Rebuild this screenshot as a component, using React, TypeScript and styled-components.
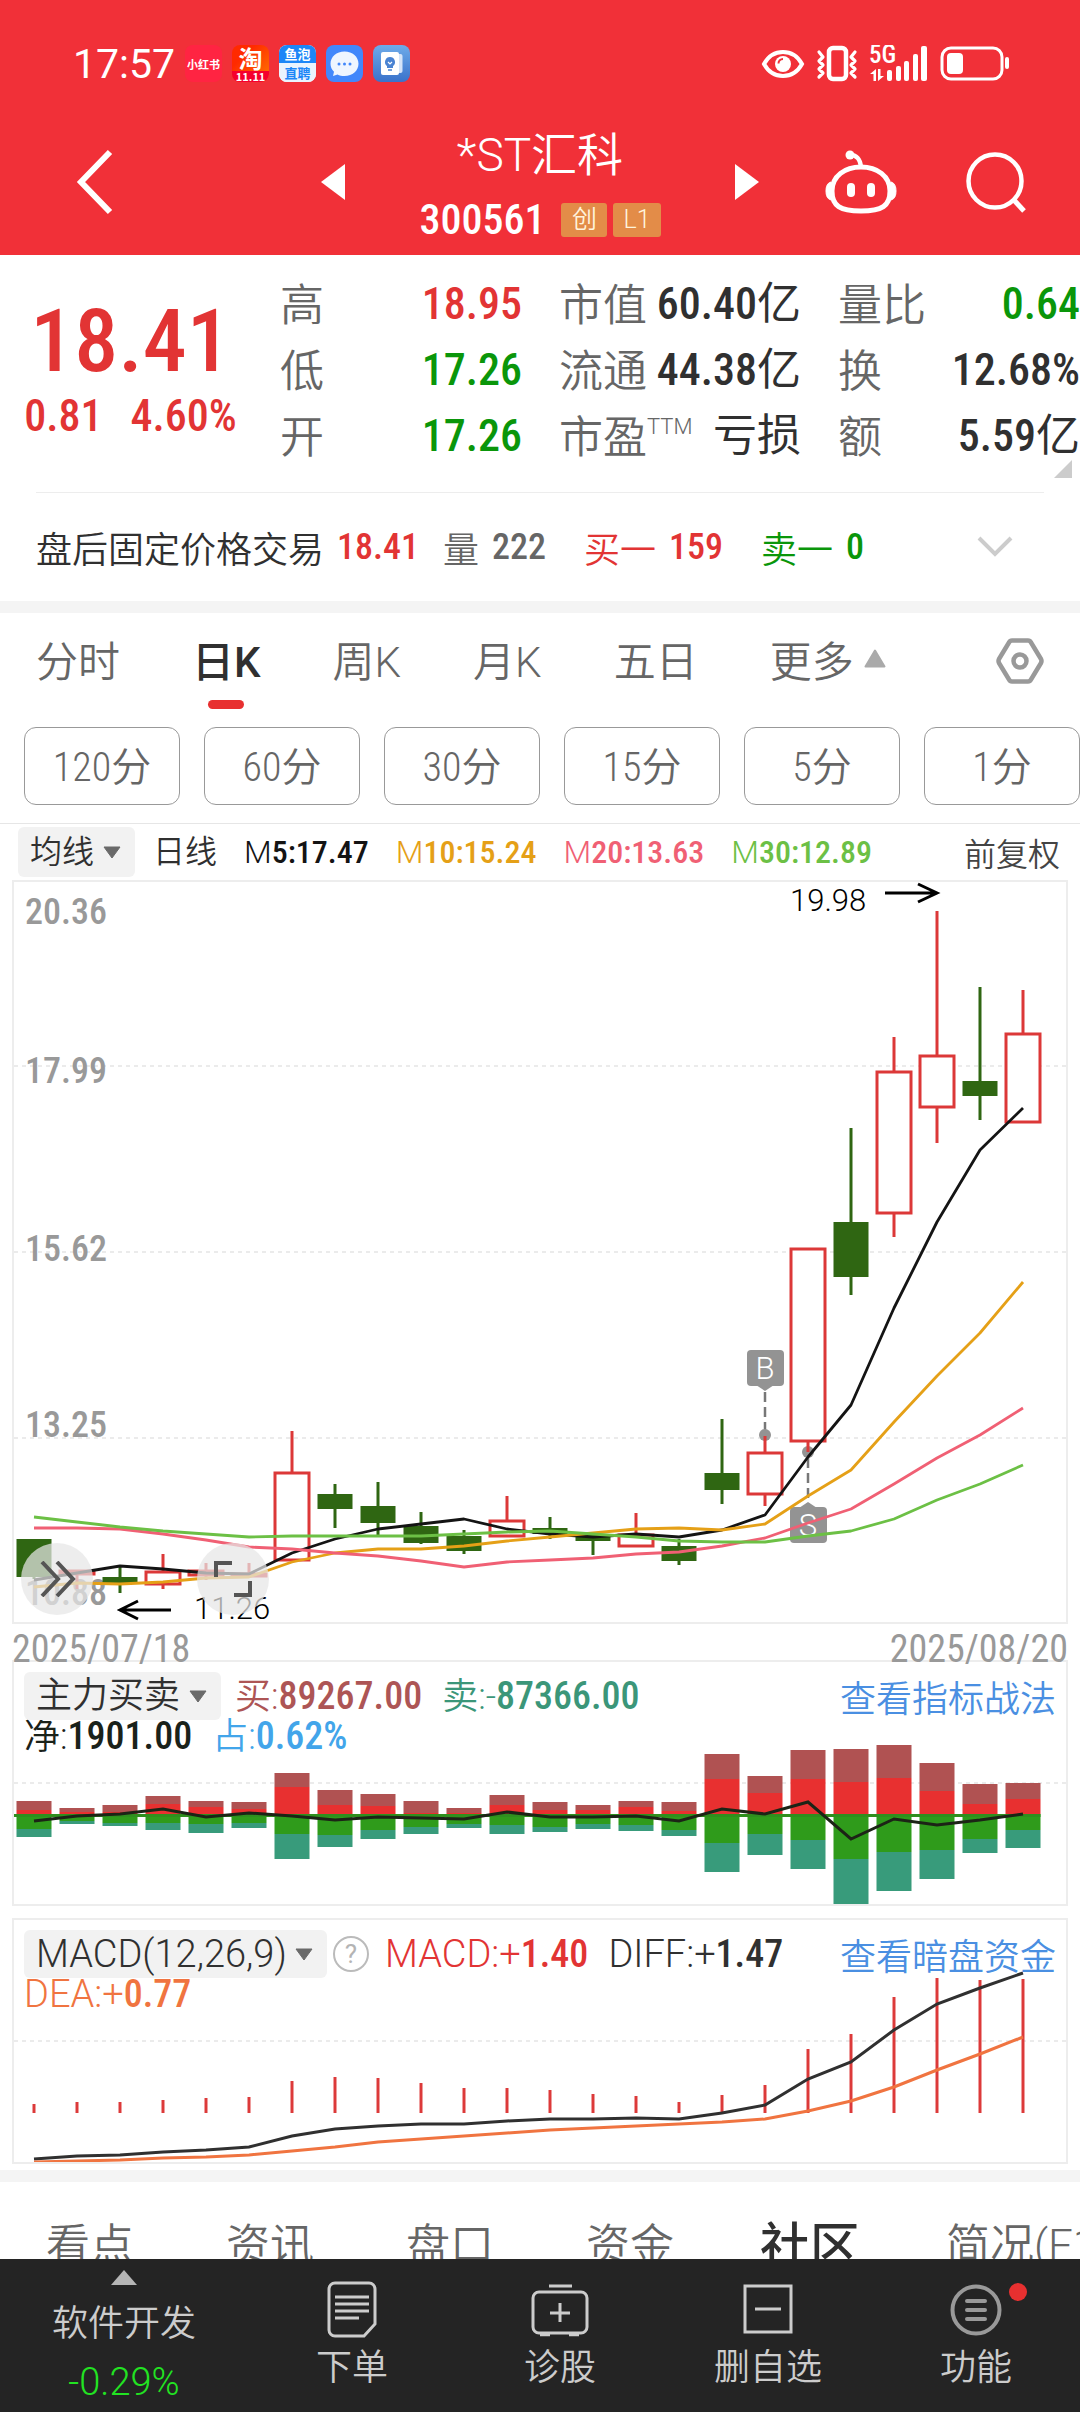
import React from 'react';
import styled, { createGlobalStyle } from 'styled-components';

const CJK = '"Noto Sans CJK SC", sans-serif';
const TEXT_FONT = `Roboto, ${CJK}`;
const NUM_FONT = `"Roboto Condensed", Roboto, ${CJK}`;
const LIGHT = 350;

const color = {
  brand: '#f13038',
  up: '#e23434',
  down: '#0a960a',
  ink: '#303030',
  muted: '#666666',
  faint: '#999999',
  line: '#ededed',
  band: '#f4f4f4',
  link: '#4a8fe2',
  candleUp: '#dc3838',
  candleDown: '#2f6612',
};

const GlobalStyle = createGlobalStyle`
  * { box-sizing: border-box; }
  body { margin: 0; background: #fff; }
  button, select { font: inherit; color: inherit; background: none; border: 0; padding: 0; margin: 0; cursor: pointer; }
  a { color: inherit; text-decoration: none; }
  svg { display: block; }
`;

const Screen = styled.div`
  display: flex;
  flex-direction: column;
  height: 100vh;
  overflow: hidden;
  font-family: ${CJK};
  font-weight: ${LIGHT};
  color: ${color.ink};
  background: #fff;
`;

const Content = styled.main`
  flex: 1;
  min-height: 0;
  overflow: hidden;
`;

/* ---------- header ---------- */

const Header = styled.header`
  background: ${color.brand};
  color: #fff;
`;

const StatusBar = styled.div`
  display: flex;
  align-items: center;
  justify-content: space-between;
  height: 108px;
  padding: 45px 70px 26px 73px;
`;

const StatusGroup = styled.div<{ $gap: number }>`
  display: flex;
  align-items: center;
  gap: ${p => p.$gap}px;
`;

const Clock = styled.span`
  font-family: ${TEXT_FONT};
  font-weight: 400;
  font-size: 41px;
  line-height: 36px;
`;

const AppIcon = styled.span<{ $bg: string; $size: number }>`
  display: flex;
  flex-direction: column;
  align-items: center;
  justify-content: center;
  width: 37px;
  height: 37px;
  border-radius: 8px;
  overflow: hidden;
  background: ${p => p.$bg};
  font-size: ${p => p.$size}px;
  font-weight: 700;
  line-height: 18px;
  white-space: nowrap;
`;

const AppIconBand = styled.span<{ $bg: string; $color: string; $size: number; $height: number }>`
  width: 100%;
  height: ${p => p.$height}px;
  background: ${p => p.$bg};
  color: ${p => p.$color};
  font-size: ${p => p.$size}px;
  line-height: ${p => p.$height}px;
  text-align: center;
`;

const TitleBar = styled.div`
  display: grid;
  grid-template-columns: 1fr 438px 1fr;
  align-items: center;
  height: 147px;
`;

const TitleActions = styled.div<{ $end?: boolean }>`
  display: flex;
  align-items: center;
  justify-content: ${p => (p.$end ? 'flex-end' : 'flex-start')};
  gap: 68px;
  padding: ${p => (p.$end ? '0 53px 0 0' : '0 0 0 76px')};
`;

const StockSwitcher = styled.div`
  display: flex;
  align-items: center;
  justify-content: space-between;
`;

const TitleBlock = styled.div`
  display: flex;
  flex-direction: column;
  align-items: center;
  gap: 20px;
`;

const StockName = styled.h1`
  margin: 0;
  font-family: ${TEXT_FONT};
  font-weight: ${LIGHT};
  font-size: 46px;
  line-height: 56px;
`;

const CodeRow = styled.div`
  display: flex;
  align-items: center;
  gap: 6px;
  height: 34px;
`;

const Code = styled.span`
  margin-right: 10px;
  font-family: ${NUM_FONT};
  font-weight: 500;
  font-size: 42px;
  line-height: 34px;
`;

const Badge = styled.span`
  min-width: 46px;
  padding: 0 10px;
  border-radius: 3px;
  background: #e38c48;
  color: #fff3dc;
  font-family: ${TEXT_FONT};
  font-size: 25px;
  line-height: 34px;
  text-align: center;
`;

/* ---------- quote ---------- */

const Quote = styled.section`
  position: relative;
  display: grid;
  grid-template-columns: 243px repeat(3, 1fr);
  column-gap: 37px;
  padding: 16px 0 23px;
`;

const PriceBlock = styled.div`
  display: flex;
  flex-direction: column;
  align-items: center;
  padding: 18px 0 0 18px;
  font-family: ${NUM_FONT};
  font-weight: 500;
  color: ${color.up};
`;

const Price = styled.div`
  font-size: 88px;
  line-height: 104px;
`;

const Change = styled.div`
  display: flex;
  gap: 28px;
  font-size: 44px;
  line-height: 46px;
`;

const Stats = styled.dl`
  margin: 0;
`;

const Stat = styled.div`
  display: flex;
  justify-content: space-between;
  height: 66px;
  font-size: 44px;
  line-height: 66px;
  white-space: nowrap;
`;

const StatLabel = styled.dt`
  display: flex;
  line-height: 62px;
  color: ${color.muted};
`;

const StatSup = styled.small`
  font-family: ${TEXT_FONT};
  font-size: 22px;
  line-height: 48px;
`;

const StatValue = styled.dd<{ $color: string }>`
  margin: 0;
  font-family: ${NUM_FONT};
  font-weight: 500;
  color: ${p => p.$color};
`;

const Unit = styled.span`
  font-weight: 400;
`;

const CornerMark = styled.svg`
  position: absolute;
  right: 8px;
  bottom: 14px;
`;

const AfterHours = styled.section`
  display: flex;
  align-items: center;
  justify-content: space-between;
  height: 109px;
  margin: 0 36px;
  padding-right: 31px;
  border-top: 1px solid ${color.line};
  font-size: 36px;
  line-height: 48px;
`;

const TradeGroup = styled.div<{ $gap: number }>`
  display: flex;
  align-items: center;
  gap: ${p => p.$gap}px;
`;

const TradeItem = styled.span<{ $color: string }>`
  display: flex;
  gap: 13px;
  color: ${p => p.$color};
`;

const Num = styled.span<{ $color?: string; $size?: number }>`
  font-family: ${NUM_FONT};
  font-weight: 500;
  color: ${p => p.$color ?? 'inherit'};
  font-size: ${p => (p.$size ? `${p.$size}px` : 'inherit')};
`;

const Band = styled.div`
  height: 12px;
  background: ${color.band};
`;

/* ---------- period tabs ---------- */

const PeriodTabs = styled.nav`
  display: flex;
  align-items: center;
  gap: 72px;
  height: 96px;
  padding: 0 36px;
`;

const PeriodTab = styled.button<{ $active?: boolean }>`
  position: relative;
  display: flex;
  align-items: center;
  gap: 10px;
  height: 96px;
  padding-bottom: 6px;
  font-family: ${TEXT_FONT};
  font-size: 42px;
  font-weight: ${p => (p.$active ? 500 : LIGHT)};
  color: ${p => (p.$active ? color.ink : color.muted)};

  &::after {
    content: '';
    display: ${p => (p.$active ? 'block' : 'none')};
    position: absolute;
    left: 50%;
    bottom: 0;
    width: 36px;
    height: 9px;
    margin-left: -18px;
    border-radius: 5px;
    background: #e83030;
  }
`;

const SettingsButton = styled.button`
  margin-left: auto;
`;

const MinuteRow = styled.div`
  display: grid;
  grid-template-columns: repeat(6, 1fr);
  gap: 24px;
  padding: 18px 0 18px 24px;
  border-bottom: 1px solid #e6e6e6;
`;

const MinuteButton = styled.button`
  height: 78px;
  padding-bottom: 4px;
  border: 1px solid ${color.faint};
  border-radius: 12px;
  color: ${color.muted};
  font-family: ${NUM_FONT};
  font-size: 40px;
  font-weight: ${LIGHT};
`;

/* ---------- charts ---------- */

const AverageRow = styled.div`
  display: flex;
  align-items: center;
  gap: 18px;
  height: 56px;
  padding: 0 20px 0 18px;
  font-size: 32px;
  line-height: 50px;
  white-space: nowrap;
`;

const Averages = styled.div`
  display: flex;
  gap: 27px;
`;

const Picker = styled.label<{ $size: number }>`
  position: relative;
  display: flex;
  align-items: center;
  height: ${p => (p.$size > 32 ? 48 : 50)}px;
  border-radius: 6px;
  background: #f2f2f2;
  font-family: ${TEXT_FONT};
  font-size: ${p => p.$size}px;
`;

const PickerSelect = styled.select`
  appearance: none;
  height: 100%;
  padding: 0 40px 0 12px;
`;

const PickerCaret = styled.svg`
  position: absolute;
  right: 14px;
  top: 50%;
  margin-top: -6px;
  pointer-events: none;
`;

const Average = styled.span<{ $color: string }>`
  font-family: ${TEXT_FONT};
  color: ${p => p.$color};
`;

const AdjustButton = styled.button`
  margin-left: auto;
  color: #444;
`;

const Panel = styled.section`
  display: grid;
  margin: 0 12px;
  border: 2px solid ${color.line};

  & > * {
    grid-area: 1 / 1;
    min-width: 0;
  }
`;

const Plot = styled.svg`
  width: 100%;
  height: auto;
`;

const PlotText = styled.text<{ $size: number; $fill: string; $num?: boolean }>`
  font-family: ${p => (p.$num ? NUM_FONT : TEXT_FONT)};
  font-weight: ${p => (p.$num ? 500 : 300)};
  font-size: ${p => p.$size}px;
  fill: ${p => p.$fill};
`;

const PlotButtons = styled.div`
  display: flex;
  align-items: flex-end;
  gap: 104px;
  padding: 0 0 7px 7px;
  z-index: 1;
`;

const RoundButton = styled.button`
  display: flex;
  align-items: center;
  justify-content: center;
  width: 72px;
  height: 72px;
  border-radius: 50%;
  background: rgba(230, 230, 230, 0.72);
`;

const DateRow = styled.div`
  display: flex;
  justify-content: space-between;
  height: 36px;
  padding: 0 12px;
  font-family: ${NUM_FONT};
  font-weight: 400;
  font-size: 38px;
  line-height: 50px;
  color: ${color.faint};
`;

const Legend = styled.div`
  display: flex;
  flex-direction: column;
  padding: 10px;
  z-index: 1;
  font-size: 36px;
  white-space: nowrap;
`;

const LegendRow = styled.div<{ $height: number; $gap: number }>`
  display: flex;
  align-items: center;
  gap: ${p => p.$gap}px;
  height: ${p => p.$height}px;
  line-height: ${p => p.$height}px;
`;

const LegendItem = styled.span<{ $color: string; $size?: number }>`
  font-family: ${TEXT_FONT};
  font-size: ${p => p.$size ?? 36}px;
  color: ${p => p.$color};
`;

const HelpButton = styled.button`
  width: 36px;
  height: 36px;
  margin-right: 10px;
  border: 2px solid #bbb;
  border-radius: 50%;
  color: #b4b4b4;
  font-family: ${TEXT_FONT};
  font-weight: 400;
  font-size: 26px;
  line-height: 32px;
`;

const PanelLink = styled.a`
  margin-left: auto;
  font-size: 36px;
  color: ${color.link};
`;

const Spacer = styled.div<{ $height: number }>`
  height: ${p => p.$height}px;
`;

/* ---------- bottom ---------- */

const InfoTabs = styled.nav`
  display: flex;
  height: 120px;
  overflow: hidden;
`;

const InfoTab = styled.button<{ $active?: boolean }>`
  flex: none;
  padding: 0 ${p => (p.$active ? 40 : 46)}px;
  font-family: ${TEXT_FONT};
  font-size: ${p => (p.$active ? 50 : 44)}px;
  font-weight: ${p => (p.$active ? 500 : LIGHT)};
  color: ${p => (p.$active ? color.ink : color.muted)};
  white-space: nowrap;
`;

const BottomBar = styled.footer`
  display: grid;
  grid-template-columns: 248px repeat(4, 1fr);
  height: 153px;
  background: #242424;
  color: #cccccc;
  font-size: 36px;
`;

const SectorButton = styled.button`
  display: flex;
  flex-direction: column;
  align-items: center;
  justify-content: flex-start;
  padding-top: 11px;
  line-height: 62px;
`;

const SectorName = styled.span`
  margin-top: 4px;
`;

const SectorChange = styled.span`
  font-family: ${TEXT_FONT};
  font-size: 38px;
  color: #22e322;
`;

const BarButton = styled.button`
  display: flex;
  flex-direction: column;
  align-items: center;
  justify-content: flex-start;
  gap: 8px;
  padding-top: 22px;
  line-height: 36px;
`;

const BarIcon = styled.span`
  position: relative;
  display: block;
`;

const Dot = styled.i`
  position: absolute;
  top: 2px;
  right: -25px;
  width: 18px;
  height: 18px;
  border-radius: 50%;
  background: #e83030;
`;

/* ---------- data ---------- */

const STEP = 43;
const FIRST = 20;
const HALF = 17.5;
const at = (i: number) => FIRST + STEP * i;

type Candle = { up?: boolean; high: number; top: number; bottom: number; low: number };

const c = (up: boolean, high: number, top: number, bottom: number, low: number): Candle => ({ up, high, top, bottom, low });

const candles: Candle[] = [
  c(false, 657, 657, 695, 697), c(true, 688, 689, 692, 707), c(false, 685, 695, 702, 711), c(true, 672, 690, 702, 707),
  c(true, 681, 689, 693, 698), c(true, 681, 692, 694, 695), c(true, 549, 591, 678, 679), c(false, 602, 612, 627, 646),
  c(false, 600, 624, 641, 653), c(false, 630, 644, 661, 662), c(false, 648, 654, 669, 672), c(true, 614, 639, 654, 655),
  c(false, 635, 646, 652, 657), c(false, 650, 652, 659, 673), c(true, 631, 653, 664, 665), c(false, 657, 664, 679, 683),
  c(false, 537, 591, 608, 622), c(true, 554, 571, 612, 624), c(true, 367, 367, 559, 570), c(false, 246, 340, 395, 413),
  c(true, 155, 190, 331, 355), c(true, 29, 174, 225, 261), c(false, 105, 199, 214, 238), c(true, 108, 152, 240, 241),
];

const averages = [
  { stroke: '#141414', y: [698, 691, 684, 687, 691, 692, 671, 657, 647, 642, 637, 647, 652, 655, 652, 655, 648, 633, 575, 523, 426, 340, 268, 226] },
  { stroke: '#e5a017', y: [705, 701, 702, 700, 696, 695, 680, 671, 667, 667, 664, 659, 655, 651, 647, 646, 648, 642, 614, 588, 540, 494, 451, 400] },
  { stroke: '#f06074', y: [646, 646, 647, 652, 658, 665, 667, 671, 674, 679, 685, 680, 678, 676, 672, 670, 664, 656, 641, 627, 602, 576, 553, 526] },
  { stroke: '#6cc045', y: [635, 640, 645, 649, 652, 655, 654, 654, 654, 654, 652, 650, 649, 652, 655, 659, 660, 660, 654, 649, 637, 618, 602, 583] },
];

const priceGrid = [
  { label: '20.36', baseline: 42 },
  { label: '17.99', baseline: 201, line: 184 },
  { label: '15.62', baseline: 379, line: 370 },
  { label: '13.25', baseline: 555, line: 556 },
  { label: '10.88', baseline: 723 },
];

/* per day: outer buy, main buy, main sell, outer sell */
const flows: number[][] = [
  [139, 148, 167, 175], [146, 150, 159, 162], [143, 150, 161, 164], [134, 142, 161, 168], [139, 145, 162, 171], [140, 147, 161, 166],
  [111, 125, 172, 197], [128, 143, 173, 185], [132, 144, 168, 177], [139, 151, 165, 172], [146, 151, 162, 166], [133, 143, 163, 172],
  [140, 148, 165, 170], [143, 148, 162, 167], [139, 145, 163, 169], [140, 149, 168, 174], [92, 117, 181, 210], [114, 131, 172, 193],
  [88, 117, 178, 207], [87, 120, 197, 242], [83, 116, 190, 229], [101, 129, 188, 217], [122, 142, 177, 191], [121, 137, 168, 186],
];
const netFlow = [159, 154, 152, 147, 155, 151, 154, 158, 155, 156, 157, 150, 155, 155, 154, 159, 147, 152, 140, 177, 157, 163, 158, 152];

const macd = [184, 182, 182, 180, 178, 177, 161, 157, 158, 163, 168, 168, 170, 174, 176, 182, 175, 165, 129, 114, 77, 58, 60, 59];
const diff = [239, 236, 235, 232, 230, 227, 216, 209, 206, 204, 204, 201, 199, 199, 198, 199, 193, 185, 159, 142, 110, 84, 68, 53];
const dea = [242, 241, 240, 238, 237, 235, 231, 227, 222, 219, 216, 213, 210, 208, 206, 204, 202, 199, 191, 181, 167, 150, 134, 117];

const points = (ys: number[]) => ys.map((y, i) => `${at(i)},${y}`).join(' ');

/* ---------- pieces ---------- */

function GridLine({ y }: { y: number }) {
  return <line x1="0" x2="1052" y1={y} y2={y} stroke="#ebebeb" strokeWidth="2" strokeDasharray="4 4" />;
}

function IndicatorPicker({ name, value, size }: { name: string; value: string; size: number }) {
  return (
    <Picker $size={size}>
      <PickerSelect aria-label={name} defaultValue={value}>
        <option>{value}</option>
      </PickerSelect>
      <PickerCaret width="18" height="13" viewBox="0 0 18 13">
        <path d="M1 1H17L9 12Z" fill="#6a6a6a" stroke="#6a6a6a" strokeLinejoin="round" />
      </PickerCaret>
    </Picker>
  );
}

function StatusIcons() {
  return (
    <StatusGroup $gap={11}>
      <svg width="44" height="37" viewBox="0 0 44 37" fill="none" stroke="#fff" strokeWidth="4">
        <path d="M3 19C8 10 15 7 22 7s14 3 19 12C36 28 29 31 22 31S8 28 3 19Z" />
        <circle cx="22" cy="19" r="8" fill="#fff" stroke="none" />
        <path d="M17.500 18.500a4.500 4.500 0 0 1 4.500-4.500" stroke="#f13038" strokeWidth="2" />
      </svg>
      <svg width="42" height="37" viewBox="0 0 42 37" fill="none" stroke="#fff" strokeLinecap="round" strokeLinejoin="round">
        <rect x="13" y="3" width="17" height="31" rx="4" strokeWidth="4.500" />
        <path d="M3 7l4 5-4 4 4 4-4 4 4 4-4 4M39 7l-4 5 4 4-4 4 4 4-4 4 4 4" strokeWidth="3.200" />
      </svg>
      <svg width="59" height="37" viewBox="0 0 59 37" fill="#fff">
        <PlotText as="text" x="0" y="18" $size={25} $fill="#fff" $num>5G</PlotText>
        <path d="M1 29l6-5v12H4.500v-7zM15 31l-6 5V24h2.500v7z" />
        <rect x="18" y="25" width="5" height="11" rx="2" />
        <rect x="27" y="21" width="5" height="15" rx="2" />
        <rect x="35" y="16" width="5" height="20" rx="2" />
        <rect x="44" y="9" width="5" height="27" rx="2" />
        <rect x="52" y="1" width="6" height="35" rx="2" />
      </svg>
      <svg width="71" height="37" viewBox="0 0 71 37" fill="none">
        <rect x="3" y="3" width="60" height="31" rx="9" stroke="#fff" strokeWidth="3" />
        <rect x="8" y="8" width="16" height="21" rx="4" fill="#fff" />
        <rect x="66" y="12" width="4" height="12" rx="2" fill="#fff" />
      </svg>
    </StatusGroup>
  );
}

function HeaderView() {
  return (
    <Header>
      <StatusBar>
        <StatusGroup $gap={10}>
          <Clock>17:57</Clock>
          <AppIcon $bg="#ff2442" $size={11}>小红书</AppIcon>
          <AppIcon $bg="linear-gradient(135deg,#ff2a00 30%,#ff7a00)" $size={24}>
            <AppIconBand $bg="none" $color="#fff" $size={24} $height={26}>淘</AppIconBand>
            <AppIconBand $bg="#f5002d" $color="#fff" $size={11} $height={11}>11.11</AppIconBand>
          </AppIcon>
          <AppIcon $bg="#fff" $size={13}>
            <AppIconBand $bg="#1d86f7" $color="#fff" $size={13} $height={18}>鱼泡</AppIconBand>
            <AppIconBand $bg="#eaf3fe" $color="#1d86f7" $size={13} $height={19}>直聘</AppIconBand>
          </AppIcon>
          <AppIcon $bg="#4287fb" $size={12}>
            <svg width="37" height="37" viewBox="0 0 37 37">
              <path d="M18.500 6.500c8 0 14 5.300 14 12.200S26.500 31 18.500 31c-2.700 0-5-.5-7-1.500L7 31l1-4.200c-2.200-2.200-3.500-5-3.500-8.100 0-6.900 6-12.200 14-12.200Z" fill="#eff5ff" />
              <g fill="#4287fb"><circle cx="13" cy="19" r="1.500" /><circle cx="18.500" cy="19" r="1.500" /><circle cx="24" cy="19" r="1.500" /></g>
            </svg>
          </AppIcon>
          <AppIcon $bg="linear-gradient(#6eabe9,#3a72cb)" $size={12}>
            <svg width="37" height="37" viewBox="0 0 37 37">
              <path d="M26 9h1.500a2 2 0 0 1 2 2v15a2 2 0 0 1-2 2H26Z" fill="#d5e4f8" />
              <rect x="8" y="7" width="18" height="23" rx="2" fill="#fff" />
              <path d="M17 12a5 5 0 0 0-3 9v2h6v-2a5 5 0 0 0-3-9Z" fill="#4a83d2" />
              <path d="M15 25h4" stroke="#4a83d2" strokeWidth="1.500" fill="none" />
              <path d="M15 17l2 2 2-2" stroke="#fff" strokeWidth="1.200" fill="none" />
            </svg>
          </AppIcon>
        </StatusGroup>
        <StatusIcons />
      </StatusBar>
      <TitleBar>
        <TitleActions>
          <button aria-label="返回">
            <svg width="38" height="66" viewBox="0 0 38 66" fill="none" stroke="#fff" strokeWidth="6">
              <path d="M34 3L5 33l29 30" />
            </svg>
          </button>
        </TitleActions>
        <StockSwitcher>
          <button aria-label="上一只">
            <svg width="24" height="36" viewBox="0 0 24 36"><path d="M24 0v36L0 18Z" fill="#fff" /></svg>
          </button>
          <TitleBlock>
            <StockName>*ST汇科</StockName>
            <CodeRow>
              <Code>300561</Code>
              <Badge>创</Badge>
              <Badge>L1</Badge>
            </CodeRow>
          </TitleBlock>
          <button aria-label="下一只">
            <svg width="24" height="36" viewBox="0 0 24 36"><path d="M0 0v36l24-18Z" fill="#fff" /></svg>
          </button>
        </StockSwitcher>
        <TitleActions $end>
          <button aria-label="智能助手">
            <svg width="72" height="64" viewBox="0 0 72 64" fill="none" stroke="#fff">
              <path d="M36 17C52 17 65 26 65 41 65 56 57 61 36 61S7 56 7 41C7 26 20 17 36 17Z" strokeWidth="5" />
              <path d="M6 32C2 33 1 37 1 41s1 8 5 9ZM66 32c4 1 5 5 5 9s-1 8-5 9Z" fill="#fff" strokeWidth="1" />
              <path d="M25 5c7 0 10 4 11 12" strokeWidth="4.500" />
              <circle cx="25" cy="5" r="4.500" fill="#fff" stroke="none" />
              <rect x="22" y="33" width="8" height="14" rx="4" fill="#fff" stroke="none" />
              <rect x="42" y="33" width="8" height="14" rx="4" fill="#fff" stroke="none" />
            </svg>
          </button>
          <button aria-label="搜索">
            <svg width="62" height="62" viewBox="0 0 62 62" fill="none" stroke="#fff" strokeWidth="4.500">
              <circle cx="30" cy="30" r="26.500" />
              <path d="M48 48l11 12" strokeWidth="5" />
            </svg>
          </button>
        </TitleActions>
      </TitleBar>
    </Header>
  );
}

function QuoteView() {
  return (
    <>
      <Quote>
        <PriceBlock>
          <Price>18.41</Price>
          <Change><span>0.81</span><span>4.60%</span></Change>
        </PriceBlock>
        <Stats>
          <Stat><StatLabel>高</StatLabel><StatValue $color={color.up}>18.95</StatValue></Stat>
          <Stat><StatLabel>低</StatLabel><StatValue $color={color.down}>17.26</StatValue></Stat>
          <Stat><StatLabel>开</StatLabel><StatValue $color={color.down}>17.26</StatValue></Stat>
        </Stats>
        <Stats>
          <Stat><StatLabel>市值</StatLabel><StatValue $color={color.ink}>60.40<Unit>亿</Unit></StatValue></Stat>
          <Stat><StatLabel>流通</StatLabel><StatValue $color={color.ink}>44.38<Unit>亿</Unit></StatValue></Stat>
          <Stat><StatLabel>市盈<StatSup>TTM</StatSup></StatLabel><StatValue $color={color.ink}><Unit>亏损</Unit></StatValue></Stat>
        </Stats>
        <Stats>
          <Stat><StatLabel>量比</StatLabel><StatValue $color={color.down}>0.64</StatValue></Stat>
          <Stat><StatLabel>换</StatLabel><StatValue $color={color.ink}>12.68%</StatValue></Stat>
          <Stat><StatLabel>额</StatLabel><StatValue $color={color.ink}>5.59<Unit>亿</Unit></StatValue></Stat>
        </Stats>
        <CornerMark width="18" height="18" viewBox="0 0 18 18"><path d="M18 0v18H0Z" fill="#ccc" /></CornerMark>
      </Quote>
      <AfterHours>
        <TradeGroup $gap={38}>
          <TradeGroup $gap={24}>
            <TradeItem $color={color.ink}>盘后固定价格交易<Num $color={color.up}>18.41</Num></TradeItem>
            <TradeItem $color={color.muted}>量<Num>222</Num></TradeItem>
          </TradeGroup>
          <TradeItem $color={color.up}>买一<Num>159</Num></TradeItem>
          <TradeItem $color={color.down}>卖一<Num>0</Num></TradeItem>
        </TradeGroup>
        <button aria-label="展开">
          <svg width="36" height="22" viewBox="0 0 36 22" fill="none" stroke="#ccc" strokeWidth="4"><path d="M2 2l16 16L34 2" /></svg>
        </button>
      </AfterHours>
    </>
  );
}

function MainChart() {
  return (
    <Panel>
      <Plot viewBox="0 0 1052 740" role="img" aria-label="日K线图">
        {priceGrid.map(g => g.line && <GridLine key={g.label} y={g.line} />)}
        {priceGrid.map(g => (
          <PlotText key={g.label} x="11" y={g.baseline} $size={36} $fill="#999" $num>{g.label}</PlotText>
        ))}
        <g stroke="#777" strokeWidth="2.500" strokeDasharray="10 5">
          <line x1={at(17)} x2={at(17)} y1="510" y2="548" />
          <line x1={at(18)} x2={at(18)} y1="576" y2="622" />
        </g>
        <g fill="#939393">
          <circle cx={at(17)} cy="553" r="6" />
          <circle cx={at(18)} cy="570" r="6" />
          <path d={`M${at(17) - 9} 503h18l-9 6Z`} />
          <rect x={at(17) - 18} y="468" width="37" height="36" rx="4" />
          <path d={`M${at(18) - 9} 626h18l-9-6Z`} />
          <rect x={at(18) - 18} y="625" width="37" height="36" rx="4" />
        </g>
        <PlotText x={at(17)} y="497" $size={31} $fill="#fff" textAnchor="middle">B</PlotText>
        <PlotText x={at(18)} y="654" $size={31} $fill="#fff" textAnchor="middle">S</PlotText>
        {candles.map((k, i) => {
          const x = at(i);
          const ink = k.up ? color.candleUp : color.candleDown;
          return (
            <g key={i} stroke={ink} strokeWidth="3">
              <path d={`M${x} ${k.high}V${k.top}M${x} ${k.bottom}V${k.low}`} />
              {k.up ? (
                <rect x={x - HALF + 0.5} y={k.top} width={HALF * 2 - 1} height={k.bottom - k.top} fill="#fff" />
              ) : (
                <rect x={x - HALF} y={k.top} width={HALF * 2} height={k.bottom - k.top} fill={ink} stroke="none" />
              )}
            </g>
          );
        })}
        {averages.map(a => (
          <polyline key={a.stroke} points={points(a.y)} fill="none" stroke={a.stroke} strokeWidth="2.800" strokeLinejoin="round" />
        ))}
        <PlotText x="776" y="29" $size={31} $fill="#000">19.98</PlotText>
        <PlotText x="180" y="737" $size={31} $fill="#000">11.26</PlotText>
        <g fill="none" stroke="#000" strokeWidth="3">
          <path d="M871 11H922M904 2l19 9-19 9" />
          <path d="M157 728H106M124 719l-18 9 18 9" />
        </g>
      </Plot>
      <PlotButtons>
        <RoundButton aria-label="收起">
          <svg width="38" height="36" viewBox="0 0 38 36" fill="none" stroke="#555" strokeWidth="4"><path d="M4 1l16 17L4 35M19 1l16 17-16 17" /></svg>
        </RoundButton>
        <RoundButton aria-label="全屏">
          <svg width="38" height="36" viewBox="0 0 38 36" fill="none" stroke="#555" strokeWidth="4"><path d="M2 16V2h16M36 20v14H20" /></svg>
        </RoundButton>
      </PlotButtons>
    </Panel>
  );
}

function FlowPanel() {
  return (
    <Panel>
      <Plot viewBox="0 0 1052 242" role="img" aria-label="主力买卖图">
        <GridLine y={121} />
        {flows.map(([buyOuter, buyMain, sellMain, sellOuter], i) => (
          <g key={i}>
            <rect x={at(i) - HALF} width={HALF * 2} y={buyOuter} height={buyMain - buyOuter} fill="#b05252" />
            <rect x={at(i) - HALF} width={HALF * 2} y={buyMain} height={152 - buyMain} fill="#e83030" />
            <rect x={at(i) - HALF} width={HALF * 2} y={152} height={sellMain - 152} fill="#2f9b1b" />
            <rect x={at(i) - HALF} width={HALF * 2} y={sellMain} height={sellOuter - sellMain} fill="#389b7b" />
          </g>
        ))}
        <line x1="0" x2={at(23) + HALF} y1="153.500" y2="153.500" stroke="#2f8f1e" strokeWidth="3" />
        <polyline points={points(netFlow)} fill="none" stroke="#1c2416" strokeWidth="3" />
      </Plot>
      <Legend>
        <LegendRow $height={48} $gap={14}>
          <IndicatorPicker name="副图指标一" value="主力买卖" size={36} />
          <LegendRow $height={48} $gap={20}>
            <LegendItem $color="#ad5555">买:<Num $size={38}>89267.00</Num></LegendItem>
            <LegendItem $color="#3b9679">卖:-<Num $size={38}>87366.00</Num></LegendItem>
          </LegendRow>
          <PanelLink href="#strategy">查看指标战法</PanelLink>
        </LegendRow>
        <LegendRow $height={32} $gap={20}>
          <LegendItem $color="#1a221a">净:<Num $size={38}>1901.00</Num></LegendItem>
          <LegendItem $color="#42a5ea">占:<Num $size={38}>0.62%</Num></LegendItem>
        </LegendRow>
      </Legend>
    </Panel>
  );
}

function MacdPanel() {
  return (
    <Panel>
      <Plot viewBox="0 0 1052 242" role="img" aria-label="MACD图">
        <GridLine y={121} />
        {macd.map((top, i) => (
          <line key={i} x1={at(i)} x2={at(i)} y1={top} y2="193" stroke="#dc3a3a" strokeWidth="3" />
        ))}
        <polyline points={points(diff)} fill="none" stroke="#303030" strokeWidth="3" />
        <polyline points={points(dea)} fill="none" stroke="#f07440" strokeWidth="3" />
      </Plot>
      <Legend>
        <LegendRow $height={48} $gap={6}>
          <IndicatorPicker name="副图指标二" value="MACD(12,26,9)" size={38} />
          <HelpButton aria-label="说明">?</HelpButton>
          <LegendRow $height={48} $gap={20}>
            <LegendItem $color={color.up} $size={38}>MACD:+<Num>1.40</Num></LegendItem>
            <LegendItem $color={color.ink} $size={38}>DIFF:+<Num>1.47</Num></LegendItem>
          </LegendRow>
          <PanelLink href="#funds">查看暗盘资金</PanelLink>
        </LegendRow>
        <LegendRow $height={32} $gap={20}>
          <LegendItem $color="#f07440" $size={38}>DEA:+<Num>0.77</Num></LegendItem>
        </LegendRow>
      </Legend>
    </Panel>
  );
}

function BottomNav() {
  return (
    <BottomBar>
      <SectorButton>
        <svg width="26" height="15" viewBox="0 0 26 15"><path d="M13 0l13 15H0Z" fill="#b5b5b5" /></svg>
        <SectorName>软件开发</SectorName>
        <SectorChange>-0.29%</SectorChange>
      </SectorButton>
      <BarButton>
        <BarIcon>
          <svg width="50" height="57" viewBox="0 0 50 57" fill="none" stroke="#ccc" strokeWidth="3">
            <path d="M8 2h34a6 6 0 0 1 6 6v35L37 55H8a6 6 0 0 1-6-6V8a6 6 0 0 1 6-6Z" />
            <path d="M8 16h34M8 23h34M8 30h34M8 37h24" />
          </svg>
        </BarIcon>
        下单
      </BarButton>
      <BarButton>
        <BarIcon>
          <svg width="58" height="57" viewBox="0 0 58 57" fill="none" stroke="#ccc" strokeWidth="3">
            <rect x="2" y="11" width="54" height="41" rx="6" />
            <path d="M18 5h23M29 22v19M19 32h20" />
            <path d="M9 53.500h10M38 53.500h10" strokeWidth="3.500" />
          </svg>
        </BarIcon>
        诊股
      </BarButton>
      <BarButton>
        <BarIcon>
          <svg width="50" height="57" viewBox="0 0 50 57" fill="none" stroke="#ccc" strokeWidth="3">
            <rect x="2" y="5" width="46" height="46" />
            <path d="M12 28h26" />
          </svg>
        </BarIcon>
        删自选
      </BarButton>
      <BarButton>
        <BarIcon>
          <svg width="52" height="57" viewBox="0 0 52 57" fill="none" stroke="#999" strokeWidth="4">
            <circle cx="26" cy="29" r="23.500" />
            <path d="M17 20h18M17 29h18M17 38h18" strokeLinecap="round" />
          </svg>
          <Dot />
        </BarIcon>
        功能
      </BarButton>
    </BottomBar>
  );
}

const minutes = ['120分', '60分', '30分', '15分', '5分', '1分'];
const infoTabs = ['看点', '资讯', '盘口', '资金', '社区', '简况(F10)'];
const maValues = [
  { value: '5:17.47', ink: '#141414' },
  { value: '10:15.24', ink: '#e5a017' },
  { value: '20:13.63', ink: '#f06074' },
  { value: '30:12.89', ink: '#6cc045' },
];

export default function App() {
  return (
    <Screen>
      <GlobalStyle />
      <Content>
        <HeaderView />
        <QuoteView />
        <Band />
        <PeriodTabs>
          <PeriodTab>分时</PeriodTab>
          <PeriodTab $active>日K</PeriodTab>
          <PeriodTab>周K</PeriodTab>
          <PeriodTab>月K</PeriodTab>
          <PeriodTab>五日</PeriodTab>
          <PeriodTab>
            更多
            <svg width="22" height="19" viewBox="0 0 22 19"><path d="M11 1.500L20.500 17.500H1.500Z" fill="#aaa" stroke="#aaa" strokeWidth="2" strokeLinejoin="round" /></svg>
          </PeriodTab>
          <SettingsButton aria-label="设置">
            <svg width="48" height="46" viewBox="0 0 48 46" fill="none" stroke="#999" strokeWidth="4.500" strokeLinejoin="round">
              <path d="M16 2.500h16q2 0 3 2L45 21q1 2 0 4L35 41.500q-1 2-3 2H16q-2 0-3-2L3 25q-1-2 0-4L13 4.500q1-2 3-2Z" />
              <circle cx="24" cy="23" r="6.500" />
            </svg>
          </SettingsButton>
        </PeriodTabs>
        <MinuteRow>
          {minutes.map(m => <MinuteButton key={m}>{m}</MinuteButton>)}
        </MinuteRow>
        <AverageRow>
          <IndicatorPicker name="主图指标" value="均线" size={32} />
          <Averages>
            <Average $color={color.ink}>日线</Average>
            {maValues.map(m => (
              <Average key={m.value} $color={m.ink}>M<Num>{m.value}</Num></Average>
            ))}
          </Averages>
          <AdjustButton>前复权</AdjustButton>
        </AverageRow>
        <MainChart />
        <DateRow><span>2025/07/18</span><span>2025/08/20</span></DateRow>
        <FlowPanel />
        <Spacer $height={12} />
        <MacdPanel />
        <Spacer $height={6} />
        <Band />
        <InfoTabs>
          {infoTabs.map(t => <InfoTab key={t} $active={t === '社区'}>{t}</InfoTab>)}
        </InfoTabs>
      </Content>
      <BottomNav />
    </Screen>
  );
}
